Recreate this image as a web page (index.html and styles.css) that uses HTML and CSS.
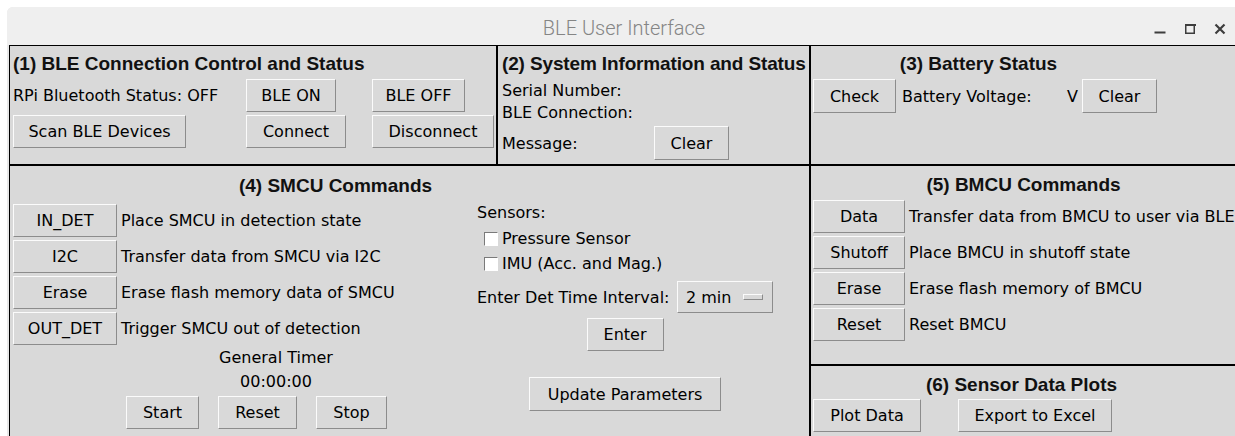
FILE: index.html
```html
<!DOCTYPE html>
<html lang="en">
<head>
<meta charset="utf-8">
<title>BLE User Interface</title>
<link rel="stylesheet" href="styles.css">
</head>
<body>
<div class="window">
  <header class="titlebar">
    <span class="title">BLE User Interface</span>
    <div class="wm-buttons">
      <svg width="12" height="12" viewBox="0 0 12 12"><path d="M0.5 9.5h11" stroke-width="2"/></svg>
      <svg width="12" height="12" viewBox="0 0 12 12"><rect x="1.75" y="1.75" width="8.5" height="8.5" stroke-width="1.5"/><path d="M1 2h11" stroke-width="2"/></svg>
      <svg width="12" height="12" viewBox="0 0 12 12"><path d="M1.5 1.5l9 9M10.5 1.5l-9 9" stroke-width="2.2"/></svg>
    </div>
  </header>

  <main class="content">
    <!-- (1) connection control -->
    <section class="panel p-ble">
      <h2 class="heading">(1) BLE Connection Control and Status</h2>
      <div class="ble-grid">
        <span>RPi Bluetooth Status: OFF</span>
        <button class="btn w-ble-on">BLE ON</button>
        <button class="btn w-ble-off">BLE OFF</button>
        <button class="btn w-scan">Scan BLE Devices</button>
        <button class="btn w-connect">Connect</button>
        <button class="btn w-disconnect">Disconnect</button>
      </div>
    </section>

    <!-- (2) system info -->
    <section class="panel p-sys">
      <h2 class="heading heading-sys">(2) System Information and Status</h2>
      <div class="sys-line first">Serial Number:</div>
      <div class="sys-line">BLE Connection:</div>
      <div class="msg-row">
        <span class="msg-label">Message:</span>
        <button class="btn btn-tall w-clear">Clear</button>
      </div>
    </section>

    <!-- (3) battery -->
    <section class="panel p-batt">
      <h2 class="heading heading-batt">(3) Battery Status</h2>
      <div class="batt-row">
        <button class="btn btn-tall w-check">Check</button>
        <span class="batt-label">Battery Voltage:</span>
        <span>V</span>
        <button class="btn btn-tall w-clear batt-clear">Clear</button>
      </div>
    </section>

    <!-- (4) SMCU commands -->
    <section class="panel p-smcu">
      <h2 class="heading heading-smcu">(4) SMCU Commands</h2>
      <div class="smcu-body">
        <div class="cmd-col">
          <div class="cmd-list">
            <div class="cmd"><button class="btn w-cmd">IN_DET</button><span class="cmd-label">Place SMCU in detection state</span></div>
            <div class="cmd"><button class="btn w-cmd">I2C</button><span class="cmd-label">Transfer data from SMCU via I2C</span></div>
            <div class="cmd"><button class="btn w-cmd">Erase</button><span class="cmd-label">Erase flash memory data of SMCU</span></div>
            <div class="cmd"><button class="btn w-cmd">OUT_DET</button><span class="cmd-label">Trigger SMCU out of detection</span></div>
          </div>
          <div class="timer">
            <div class="timer-line">General Timer</div>
            <div class="timer-line">00:00:00</div>
            <div class="timer-btns">
              <button class="btn w-start">Start</button>
              <button class="btn w-reset">Reset</button>
              <button class="btn w-stop">Stop</button>
            </div>
          </div>
        </div>

        <div class="sensor-col">
          <div class="sensor-title">Sensors:</div>
          <label class="check"><span class="box"></span>Pressure Sensor</label>
          <label class="check"><span class="box"></span>IMU (Acc. and Mag.)</label>
          <div class="interval-row">
            <span>Enter Det Time Interval:</span>
            <div class="optionmenu"><span>2 min</span><span class="om-indicator"></span></div>
          </div>
          <button class="btn w-enter">Enter</button>
          <button class="btn btn-tall w-update">Update Parameters</button>
        </div>
      </div>
    </section>

    <!-- (5) BMCU commands -->
    <section class="panel p-bmcu">
      <h2 class="heading heading-bmcu">(5) BMCU Commands</h2>
      <div class="bmcu-list">
        <div class="cmd"><button class="btn w-bmcu">Data</button><span class="cmd-label">Transfer data from BMCU to user via BLE</span></div>
        <div class="cmd"><button class="btn w-bmcu">Shutoff</button><span class="cmd-label">Place BMCU in shutoff state</span></div>
        <div class="cmd"><button class="btn w-bmcu">Erase</button><span class="cmd-label">Erase flash memory of BMCU</span></div>
        <div class="cmd"><button class="btn w-bmcu">Reset</button><span class="cmd-label">Reset BMCU</span></div>
      </div>
    </section>

    <!-- (6) plots -->
    <section class="panel p-plots">
      <h2 class="heading heading-plots">(6) Sensor Data Plots</h2>
      <div class="plot-row">
        <button class="btn w-plot">Plot Data</button>
        <button class="btn w-export">Export to Excel</button>
      </div>
    </section>
  </main>
</div>
</body>
</html>
```

FILE: styles.css
```css
* { box-sizing: border-box; }

html, body {
  margin: 0;
  padding: 0;
}

body {
  width: 1235px;
  height: 436px;
  overflow: hidden;
  background: #ffffff;
  font-family: "DejaVu Sans", sans-serif;
  font-size: 16px;
  color: #000;
}

/* ---- window frame ---- */
.window {
  margin: 7px 0 0 7px;
  width: 1234px;
  height: 440px;
  background: #e9e9e9;
  border-top-left-radius: 6px;
  overflow: hidden;
  display: flex;
  flex-direction: column;
}

.titlebar {
  height: 38px;
  flex: none;
  background: #efefef;
  display: grid;
  grid-template-columns: 1fr auto 1fr;
  align-items: center;
}

.title {
  grid-column: 2;
  padding-top: 4px;
  font-family: Roboto, "Open Sans", sans-serif;
  font-weight: 300;
  font-size: 20px;
  color: #858585;
}

.wm-buttons {
  grid-column: 3;
  justify-self: end;
  display: flex;
  gap: 18px;
  padding: 6px 15px 0 0;
}

.wm-buttons svg {
  display: block;
  fill: none;
  stroke: #3d3d3d;
}

/* ---- panel grid ---- */
.content {
  flex: 1;
  margin-left: 2px;
  display: grid;
  grid-template-columns: 488px 313px 1fr;
  grid-template-rows: 120px 200px 1fr;
}

.panel {
  border: 1px solid #000;
  background: #d9d9d9;
  min-width: 0;
}

.heading {
  margin: 0;
  font-family: "Liberation Sans", Arial, sans-serif;
  font-weight: 700;
  font-size: 19px;
  line-height: 22px;
  color: #111;
  white-space: nowrap;
}

/* ---- Tk style buttons ---- */
.btn {
  height: 33px;
  padding: 0;
  display: inline-flex;
  align-items: center;
  justify-content: center;
  background: #d9d9d9;
  border: 1px solid;
  border-color: #fbfbfb #8c8c8c #8c8c8c #fbfbfb;
  border-radius: 0;
  font-family: "DejaVu Sans", sans-serif;
  font-size: 16px;
  color: #000;
  white-space: nowrap;
}

.btn-tall { height: 34px; }

.w-ble-on { width: 90px; }
.w-ble-off { width: 93px; }
.w-scan { width: 173px; }
.w-connect { width: 100px; }
.w-disconnect { width: 122px; }
.w-clear { width: 75px; }
.w-check { width: 83px; }
.w-cmd { width: 104px; }
.w-start { width: 73px; }
.w-reset { width: 79px; }
.w-stop { width: 71px; }
.w-enter { width: 77px; }
.w-update { width: 192px; }
.w-bmcu { width: 92px; }
.w-plot { width: 108px; }
.w-export { width: 154px; }

/* ---- (1) connection ---- */
.p-ble {
  grid-column: 1;
  grid-row: 1;
  padding: 7px 0 0 3px;
}

.ble-grid {
  margin-top: 4px;
  display: grid;
  grid-template-columns: 233px 126px auto;
  grid-auto-rows: 33px;
  row-gap: 3px;
  align-items: center;
  justify-items: start;
}

/* ---- (2) system info ---- */
.p-sys {
  grid-column: 2;
  grid-row: 1;
  padding: 7px 0 0 4px;
}

.heading-sys { letter-spacing: -0.14px; }

.sys-line { line-height: 22px; }
.sys-line.first { margin-top: 5px; }

.msg-row {
  margin-top: 2px;
  display: flex;
  align-items: center;
}

.msg-label { width: 152px; }

/* ---- (3) battery ---- */
.p-batt {
  grid-column: 3;
  grid-row: 1;
  padding: 7px 0 0 2px;
}

.heading-batt { width: 331px; text-align: center; }

.batt-row {
  margin-top: 4px;
  display: flex;
  align-items: center;
}

.batt-label {
  width: 165px;
  margin-left: 6px;
}

.batt-clear { margin-left: 4px; }

/* ---- (4) SMCU ---- */
.p-smcu {
  grid-column: 1 / 3;
  grid-row: 2 / 4;
  padding: 9px 0 0 3px;
}

.heading-smcu { width: 645px; text-align: center; }

.smcu-body {
  margin-top: 5px;
  display: flex;
}

.cmd-col {
  width: 464px;
  padding-top: 2px;
}

.cmd-list,
.bmcu-list {
  display: flex;
  flex-direction: column;
  gap: 3px;
}

.cmd {
  display: flex;
  align-items: center;
}

.cmd-label {
  margin-left: 4px;
  white-space: nowrap;
}

.timer {
  width: 300px;
  margin: 1px 0 0 113px;
  text-align: center;
}

.timer-line { line-height: 24px; }

.timer-btns {
  margin-top: 2px;
  display: flex;
  gap: 19px;
}

.sensor-col {
  width: 296px;
  display: flex;
  flex-direction: column;
}

.sensor-title { line-height: 22px; }

.check {
  height: 22px;
  margin-top: 3px;
  display: flex;
  align-items: center;
}

.check .box {
  width: 14px;
  height: 14px;
  margin: 1px 4px 0 7px;
  background: #fff;
  border: 1px solid;
  border-color: #7a7a7a #ffffff #ffffff #7a7a7a;
}

.interval-row {
  margin-top: 7px;
  display: flex;
  justify-content: space-between;
  align-items: center;
}

.optionmenu {
  width: 96px;
  height: 32px;
  padding: 0 9px 0 8px;
  display: flex;
  align-items: center;
  justify-content: space-between;
  background: #d9d9d9;
  border: 1px solid;
  border-color: #fbfbfb #8c8c8c #8c8c8c #fbfbfb;
}

.om-indicator {
  width: 20px;
  height: 6px;
  background: #d9d9d9;
  border: 1px solid;
  border-color: #fbfbfb #8c8c8c #8c8c8c #fbfbfb;
}

.w-enter {
  align-self: center;
  margin-top: 5px;
}

.w-update {
  align-self: center;
  margin-top: 26px;
}

/* ---- (5) BMCU ---- */
.p-bmcu {
  grid-column: 3;
  grid-row: 2;
  padding: 8px 0 0 2px;
}

.heading-bmcu { width: 421px; text-align: center; }

.bmcu-list { margin-top: 4px; }

/* ---- (6) plots ---- */
.p-plots {
  grid-column: 3;
  grid-row: 3;
  padding: 8px 0 0 2px;
}

.heading-plots { width: 417px; text-align: center; }

.plot-row {
  margin-top: 3px;
  display: flex;
  gap: 37px;
}
```
